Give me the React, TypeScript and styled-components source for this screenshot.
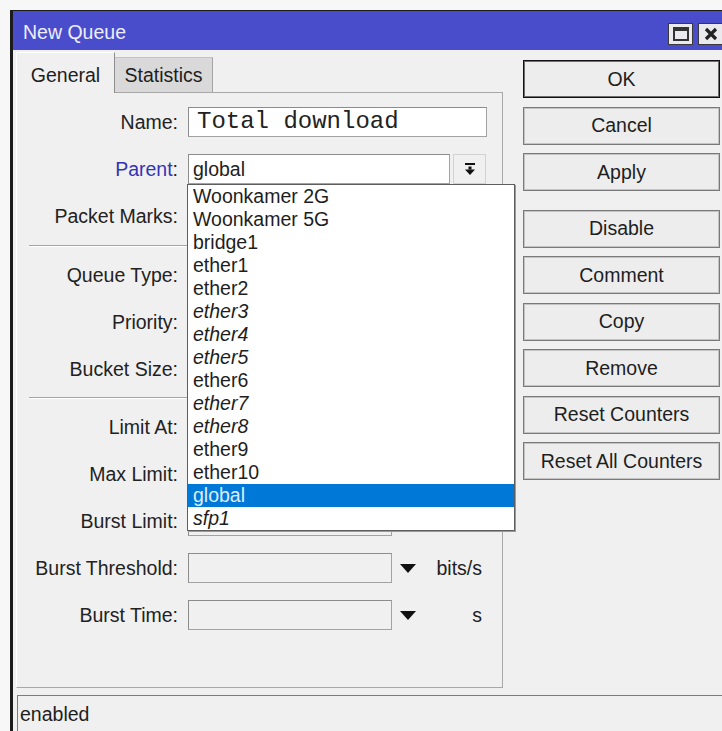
import React from 'react';
import styled, { createGlobalStyle } from 'styled-components';

const GlobalStyle = createGlobalStyle`
  html, body {
    margin: 0;
    padding: 0;
    background: #f7f7f7;
  }
  body {
    font-family: "Liberation Sans", Arial, sans-serif;
    color: #1e1e1e;
  }
`;

const Screen = styled.div`
  width: 722px;
  height: 731px;
  overflow: hidden;
  padding: 10px 0 0 10px;
  box-sizing: border-box;
`;

const Window = styled.div`
  width: 740px;
  height: 760px;
  border-left: 3px solid #1c1c1c;
  border-top: 1px solid #1c1c1c;
  background: #f0f0f0;
  display: flex;
  flex-direction: column;
`;

const TitleBar = styled.div`
  height: 39px;
  flex: none;
  background: #4a4dcb;
  display: flex;
  align-items: center;
  padding-left: 10px;
`;

const Title = styled.div`
  flex: 1;
  color: #eeeeff;
  font-size: 19.5px;
  padding-top: 4px;
`;

const TitleButtons = styled.div`
  display: flex;
  gap: 5px;
  padding-right: 30px;
  align-self: flex-end;
  margin-bottom: 5px;
`;

const TitleButton = styled.div`
  width: 25px;
  height: 22px;
  box-sizing: border-box;
  background: #e9e9ee;
  border: 1px solid #3a3a3a;
  display: flex;
  align-items: center;
  justify-content: center;
`;

const Body = styled.div`
  display: flex;
  gap: 20px;
  padding: 2px 0 0 3px;
`;

const LeftPane = styled.div`
  width: 487px;
  display: flex;
  flex-direction: column;
`;

const TabStrip = styled.div`
  display: flex;
  align-items: flex-end;
  height: 40px;
`;

const Tab = styled.div<{ $active?: boolean }>`
  box-sizing: border-box;
  font-size: 19.5px;
  text-align: center;
  line-height: 35px;
  ${({ $active }) =>
    $active
      ? `
    width: 99px;
    height: 41px;
    padding-top: 5px;
    margin-bottom: -1px;
    background: #f0f0f0;
    border-top: 1px solid #ffffff;
    border-left: 1px solid #ffffff;
    border-right: 1px solid #8e8e8e;
    position: relative;
    z-index: 1;
  `
      : `
    width: 98px;
    height: 35px;
    background: #d9d9d9;
    border-top: 1px solid #c4c4c4;
    border-right: 1px solid #a4a4a4;
  `}
`;

const Panel = styled.div`
  height: 596px;
  box-sizing: border-box;
  border: 1px solid #a8a8a8;
  border-left-color: #ffffff;
  padding-top: 14px;
`;

const Group = styled.div`
  display: flex;
  flex-direction: column;
  gap: 17px;
`;

const Row = styled.div`
  display: grid;
  grid-template-columns: 161px 1fr;
  column-gap: 10px;
  align-items: center;
  height: 30px;
`;

const Label = styled.div<{ $link?: boolean }>`
  text-align: right;
  font-size: 19.5px;
  white-space: nowrap;
  color: #222;
  span {
    color: ${({ $link }) => ($link ? '#3434b4' : 'inherit')};
  }
`;

const Control = styled.div`
  display: flex;
  align-items: center;
  height: 30px;
  position: relative;
`;

const TextBox = styled.div<{ $width: number; $blank?: boolean; $mono?: boolean }>`
  width: ${({ $width }) => $width}px;
  height: 30px;
  box-sizing: border-box;
  background: ${({ $blank }) => ($blank ? '#f0f0f0' : '#ffffff')};
  border: 1px solid #a2a2a2;
  border-top-color: #8c8c8c;
  border-left-color: #8c8c8c;
  padding-left: ${({ $mono }) => ($mono ? 8 : 4)}px;
  font-family: ${({ $mono }) =>
    $mono ? '"Liberation Mono", "Courier New", monospace' : 'inherit'};
  font-size: ${({ $mono }) => ($mono ? 24 : 19.5)}px;
  line-height: 28px;
  color: #222;
  white-space: nowrap;
  overflow: hidden;
`;

const DropButton = styled.div`
  width: 33px;
  height: 30px;
  margin-left: 3px;
  box-sizing: border-box;
  border: 1px solid #d2d2d2;
  display: flex;
  align-items: center;
  justify-content: center;
`;

const ArrowCell = styled.div`
  width: 32px;
  display: flex;
  justify-content: center;
`;

const Unit = styled.div`
  width: 58px;
  text-align: right;
  font-size: 19.5px;
`;

const Separator = styled.div<{ $top: number; $bottom: number }>`
  margin: ${({ $top, $bottom }) => `${$top}px 12px ${$bottom}px`};
  border-top: 1px solid #a3a3a3;
  border-bottom: 1px solid #ffffff;
`;

const ListBox = styled.div`
  position: absolute;
  left: -1px;
  top: 30px;
  width: 328px;
  box-sizing: border-box;
  background: #ffffff;
  border: 1px solid #5e5e5e;
  box-shadow: 1px 1px 0 #9a9a9a;
  z-index: 5;
`;

const ListItem = styled.div<{ $italic?: boolean; $selected?: boolean }>`
  height: 23px;
  line-height: 23px;
  padding-left: 5px;
  font-size: 19.5px;
  font-style: ${({ $italic }) => ($italic ? 'italic' : 'normal')};
  background: ${({ $selected }) => ($selected ? '#0078d7' : 'transparent')};
  color: ${({ $selected }) => ($selected ? '#dcedff' : '#1e1e1e')};
  white-space: nowrap;
`;

const ButtonColumn = styled.div`
  width: 197px;
  margin-top: 8px;
  display: flex;
  flex-direction: column;
  gap: 8.5px;
`;

const ActionButton = styled.div<{ $default?: boolean; $spaced?: boolean }>`
  height: 38px;
  box-sizing: border-box;
  margin-top: ${({ $spaced }) => ($spaced ? 10 : 0)}px;
  background: #ededed;
  border: 1px solid ${({ $default }) => ($default ? '#111111' : '#7a7a7a')};
  box-shadow: inset 0 0 0 1px ${({ $default }) => ($default ? '#6e6e6e' : '#c4c4c4')};
  display: flex;
  align-items: center;
  justify-content: center;
  font-size: 19.5px;
  color: #1e1e1e;
`;

const StatusBar = styled.div`
  margin: 7px 0 0 4px;
  height: 40px;
  box-sizing: border-box;
  border-top: 1px solid #7c7c7c;
  border-left: 1px solid #7c7c7c;
  padding: 2px 0 0 2px;
  font-size: 19.5px;
  line-height: 32px;
`;

const parents = [
  { name: 'Woonkamer 2G' },
  { name: 'Woonkamer 5G' },
  { name: 'bridge1' },
  { name: 'ether1' },
  { name: 'ether2' },
  { name: 'ether3', italic: true },
  { name: 'ether4', italic: true },
  { name: 'ether5', italic: true },
  { name: 'ether6' },
  { name: 'ether7', italic: true },
  { name: 'ether8', italic: true },
  { name: 'ether9' },
  { name: 'ether10' },
  { name: 'global', selected: true },
  { name: 'sfp1', italic: true },
];

const actions = [
  'OK',
  'Cancel',
  'Apply',
  'Disable',
  'Comment',
  'Copy',
  'Remove',
  'Reset Counters',
  'Reset All Counters',
];

const DownTriangle = () => (
  <svg width="16" height="9" viewBox="0 0 16 9">
    <path d="M0 0h16L8 9z" fill="#111" />
  </svg>
);

const PullDownIcon = () => (
  <svg width="14" height="14" viewBox="0 0 14 14">
    <rect x="2" y="1" width="10" height="2" fill="#111" />
    <rect x="5.5" y="4.5" width="3" height="3" fill="#111" />
    <path d="M2 7.5h10L7 13z" fill="#111" />
  </svg>
);

const BitsRow = ({ label, unit = 'bits/s' }: { label: string; unit?: string }) => (
  <Row>
    <Label>{label}:</Label>
    <Control>
      <TextBox $width={204} $blank />
      <ArrowCell>
        <DownTriangle />
      </ArrowCell>
      <Unit>{unit}</Unit>
    </Control>
  </Row>
);

const SelectRow = ({ label, width }: { label: string; width: number }) => (
  <Row>
    <Label>{label}:</Label>
    <Control>
      <TextBox $width={width} />
      <DropButton>
        <DownTriangle />
      </DropButton>
    </Control>
  </Row>
);

export default function App() {
  return (
    <>
      <GlobalStyle />
      <Screen>
        <Window>
          <TitleBar>
            <Title>New Queue</Title>
            <TitleButtons>
              <TitleButton>
                <svg width="16" height="14" viewBox="0 0 16 14">
                  <rect x="1" y="1" width="14" height="12" fill="none" stroke="#333" strokeWidth="2" />
                  <rect x="1" y="1" width="14" height="3" fill="#333" />
                </svg>
              </TitleButton>
              <TitleButton>
                <svg width="14" height="14" viewBox="0 0 14 14">
                  <path d="M2 2l10 10M12 2L2 12" stroke="#222" strokeWidth="3.2" />
                </svg>
              </TitleButton>
            </TitleButtons>
          </TitleBar>

          <Body>
            <LeftPane>
              <TabStrip>
                <Tab $active>General</Tab>
                <Tab>Statistics</Tab>
              </TabStrip>
              <Panel>
                <Group>
                  <Row>
                    <Label>Name:</Label>
                    <Control>
                      <TextBox $width={299} $mono>
                        Total download
                      </TextBox>
                    </Control>
                  </Row>
                  <Row>
                    <Label $link>
                      <span>Parent</span>:
                    </Label>
                    <Control>
                      <TextBox $width={262}>global</TextBox>
                      <DropButton>
                        <PullDownIcon />
                      </DropButton>
                      <ListBox>
                        {parents.map((p) => (
                          <ListItem key={p.name} $italic={p.italic} $selected={p.selected}>
                            {p.name}
                          </ListItem>
                        ))}
                      </ListBox>
                    </Control>
                  </Row>
                  <SelectRow label="Packet Marks" width={262} />
                </Group>

                <Separator $top={14} $bottom={13} />

                <Group>
                  <SelectRow label="Queue Type" width={262} />
                  <Row>
                    <Label>Priority:</Label>
                    <Control>
                      <TextBox $width={204} />
                    </Control>
                  </Row>
                  <BitsRow label="Bucket Size" unit="ratio" />
                </Group>

                <Separator $top={13} $bottom={13} />

                <Group>
                  <BitsRow label="Limit At" />
                  <BitsRow label="Max Limit" />
                  <BitsRow label="Burst Limit" />
                  <BitsRow label="Burst Threshold" />
                  <BitsRow label="Burst Time" unit="s" />
                </Group>
              </Panel>
            </LeftPane>

            <ButtonColumn>
              {actions.map((a) => (
                <ActionButton key={a} $default={a === 'OK'} $spaced={a === 'Disable'}>
                  {a}
                </ActionButton>
              ))}
            </ButtonColumn>
          </Body>

          <StatusBar>enabled</StatusBar>
        </Window>
      </Screen>
    </>
  );
}
